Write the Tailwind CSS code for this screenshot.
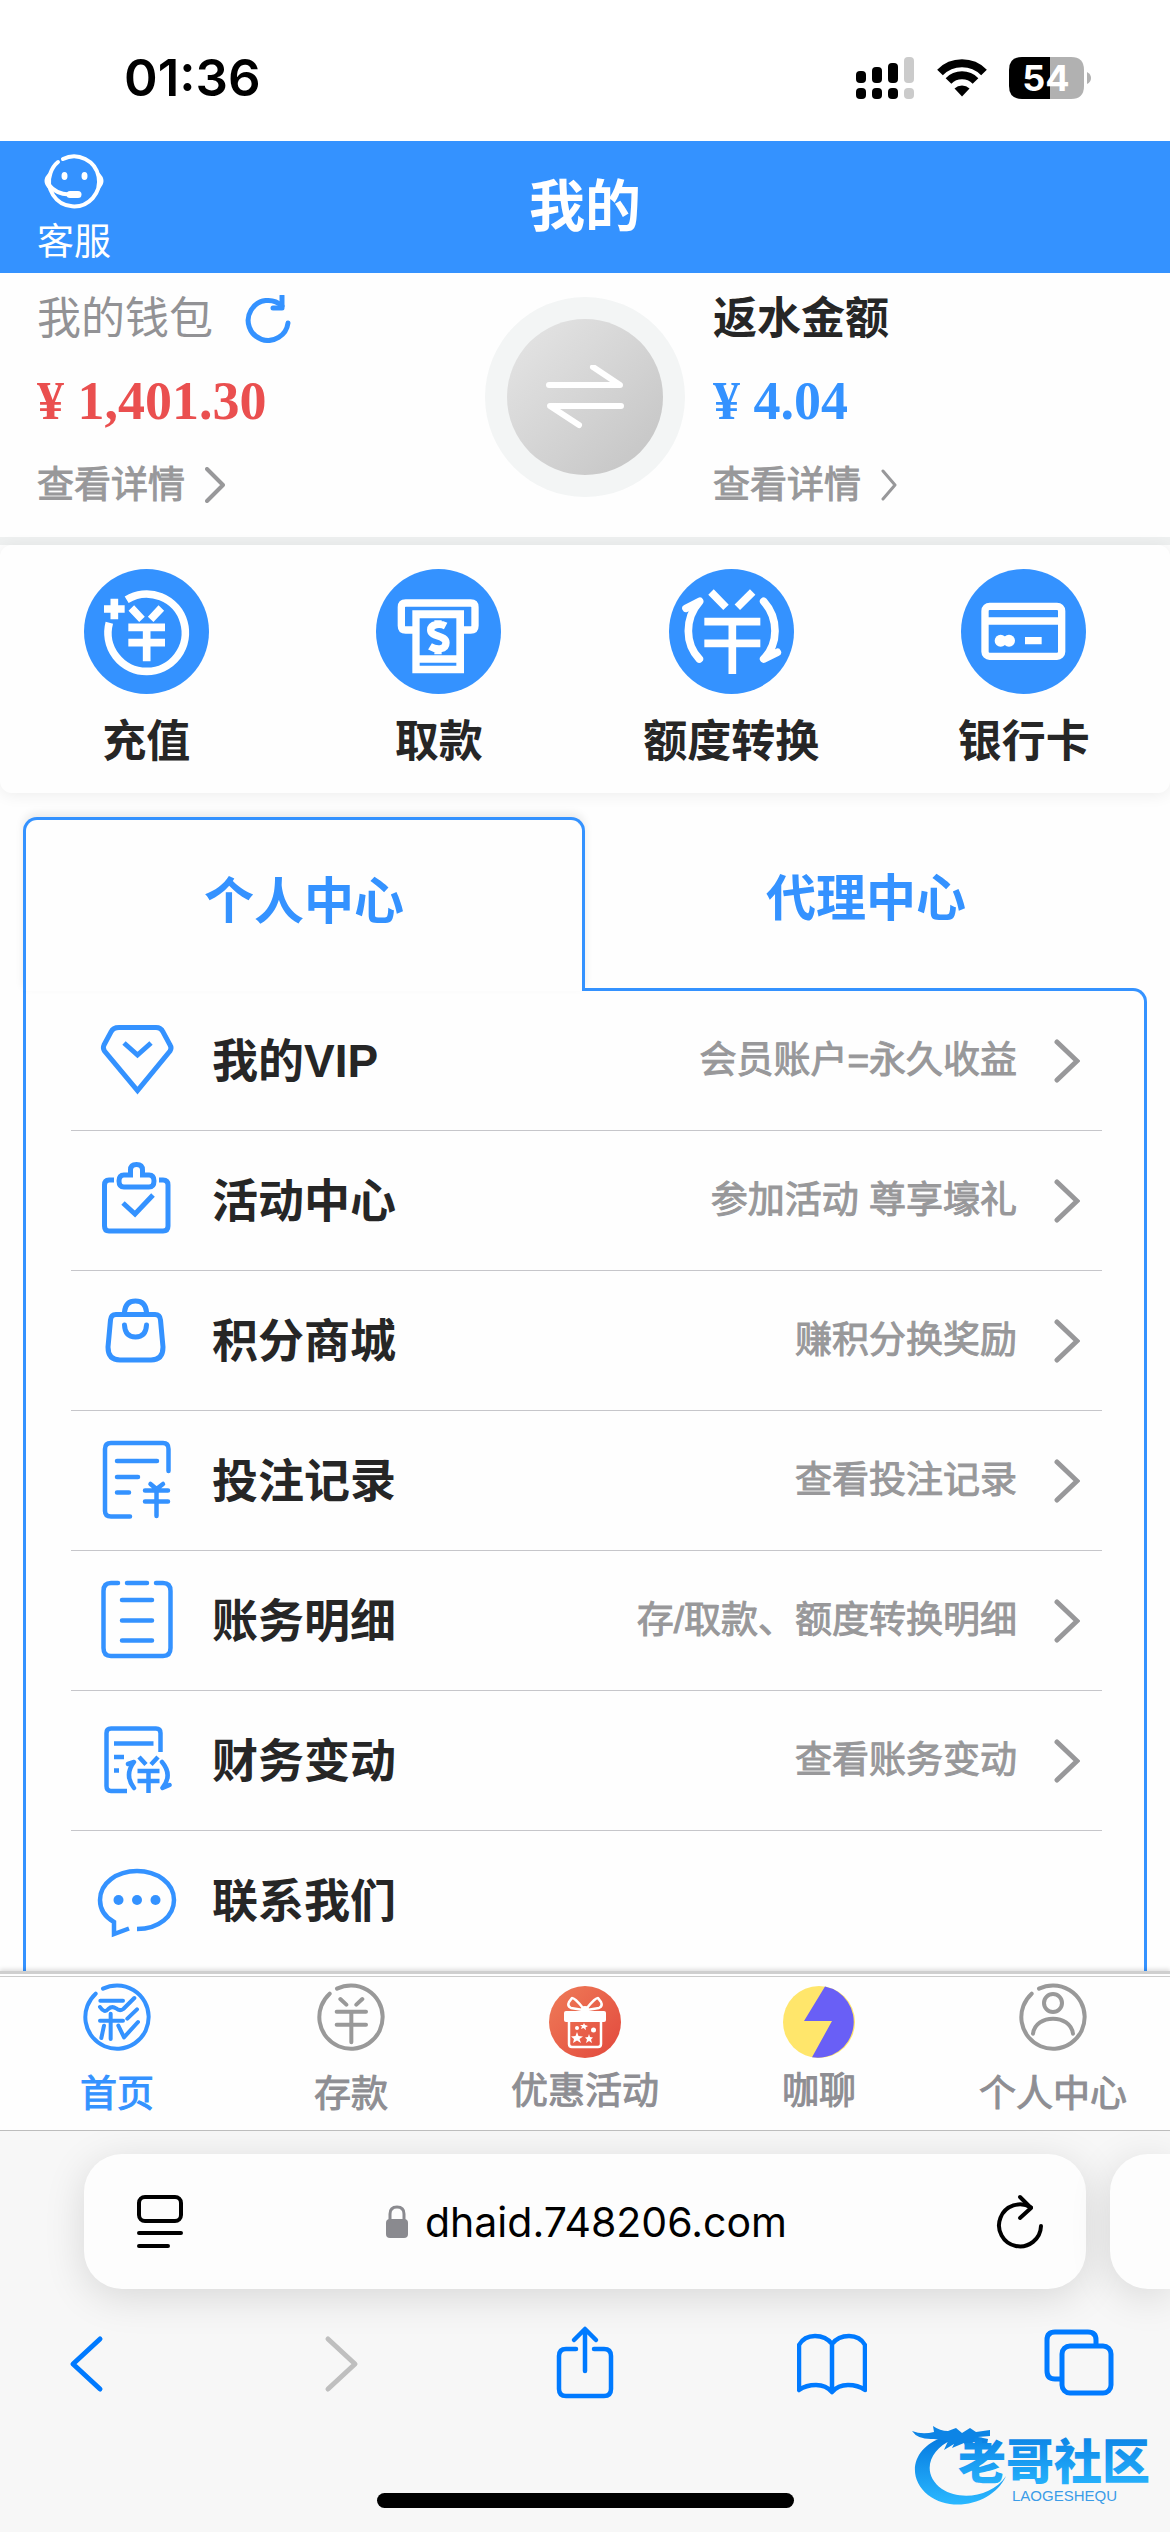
<!DOCTYPE html>
<html lang="zh-CN">
<head>
<meta charset="utf-8">
<meta name="viewport" content="width=device-width, initial-scale=1">
<title>我的</title>
<script src="https://cdn.jsdelivr.net/npm/@tailwindcss/browser@4"></script>
</head>
<body class="min-h-screen flex flex-col bg-[#fefefe] text-[#262626] font-['Liberation_Sans','Noto_Sans_CJK_SC',sans-serif]">

<!-- Status bar -->
<div class="h-[141px] pt-3.5 flex items-center justify-between pl-[124px] pr-[78px] bg-white text-black">
  <time class="font-['Inter',sans-serif] font-semibold text-[51px] leading-none">01:36</time>
  <svg class="w-[236px] h-[42px]" viewBox="0 0 236 42" role="img" aria-label="信号、无线网络、电量 54%">
    <g fill="#000">
      <rect x="0" y="14" width="10" height="12" rx="4"/><rect x="16" y="10" width="10" height="16" rx="4"/><rect x="32" y="6" width="10" height="20" rx="4"/>
      <rect x="0" y="31" width="10" height="11" rx="4"/><rect x="16" y="31" width="10" height="11" rx="4"/><rect x="32" y="31" width="10" height="11" rx="4"/>
    </g>
    <g fill="#cbcbcb"><rect x="48" y="0" width="10" height="26" rx="4"/><rect x="48" y="31" width="10" height="11" rx="4"/></g>
    <path d="M84 15.500A31 31 0 0 1 128 15.500" fill="none" stroke="#000" stroke-width="8"/>
    <path d="M92.500 24A19 19 0 0 1 119.500 24" fill="none" stroke="#000" stroke-width="8"/>
    <path d="M98.500 31.500A11 11 0 0 1 113.500 31.500L106 39.500Z" fill="#000"/>
    <path d="M166 0H194V42H166Q153 42 153 29V13Q153 0 166 0Z" fill="#000"/>
    <path d="M194 0H215Q228 0 228 13V29Q228 42 215 42H194Z" fill="#b1b1b1"/>
    <path d="M231 15Q235 17 235 21T231 27Z" fill="#b1b1b1"/>
    <text x="190" y="34" text-anchor="middle" font-family="Inter, sans-serif" font-weight="700" font-size="36" fill="#fff">54</text>
  </svg>
</div>

<!-- Page header -->
<header class="h-[132px] bg-[#3492ff] text-white grid grid-cols-[1fr_auto_1fr] items-center">
  <a href="#" class="justify-self-start ml-[37px] pt-1 flex flex-col items-center gap-2">
    <svg class="w-16 h-[60px]" viewBox="0 0 64 60" fill="none" stroke="#fff" stroke-width="4" stroke-linecap="round">
      <path d="M21 8A25 25 0 1 1 8.500 22Q11 15 16 11"/>
      <path d="M8 22Q-1 30 8 38M56 22Q65 30 56 38" fill="#fff" stroke-width="2"/>
      <path d="M7 34Q14 43 27 43.500"/><path d="M28 43.500H36" stroke-width="7"/>
      <ellipse cx="22.500" cy="25" rx="3" ry="4" fill="#fff" stroke="none"/><ellipse cx="42.500" cy="25" rx="3" ry="4" fill="#fff" stroke="none"/>
    </svg>
    <span class="text-[37px] leading-[48px]">客服</span>
  </a>
  <h1 class="text-[56px] leading-none font-bold">我的</h1>
</header>

<!-- Wallet summary -->
<section class="h-[264px] grid grid-cols-[1fr_200px_1fr] items-start pt-6">
  <div class="pl-[37px] flex flex-col">
    <div class="h-11 flex items-center gap-8 text-[#929295] text-[44px] leading-none">我的钱包
      <button type="button" aria-label="刷新"><svg class="w-12 h-12" viewBox="0 0 48 48" fill="none" stroke="#3492ff" stroke-width="5" stroke-linecap="round" stroke-linejoin="round"><path d="M37 11A20 20 0 1 0 43 28"/><path d="M37 1V13H28"/></svg></button>
    </div>
    <p class="mt-8 h-[56px] flex items-center text-[54px] leading-none font-bold text-[#ea4f4f] font-['Liberation_Serif',serif]">¥ 1,401.30</p>
    <a href="#" class="mt-8 h-12 flex items-center gap-5 text-[37px] leading-none text-[#98989a] [-webkit-text-stroke:1px]">查看详情
      <svg class="w-5 h-9" viewBox="0 0 20 36" fill="none" stroke="#98989a" stroke-width="4" stroke-linecap="round" stroke-linejoin="round"><path d="M2 2L18 18L2 34"/></svg></a>
  </div>
  <button type="button" aria-label="转换" class="w-[200px] h-[200px] rounded-full bg-[#f3f5f5] flex items-center justify-center">
    <span class="w-[156px] h-[156px] rounded-full bg-linear-to-br from-[#e6e6e6] to-[#c3c3c3] flex items-center justify-center">
      <svg class="w-20 h-16" viewBox="0 0 80 64" fill="none" stroke="#fff" stroke-width="6" stroke-linecap="round" stroke-linejoin="round"><path d="M4 20H75L48 2"/><path d="M76 41H5L34 60"/></svg>
    </span>
  </button>
  <div class="pl-7 flex flex-col">
    <h2 class="h-11 flex items-center text-[44px] leading-none font-bold">返水金额</h2>
    <p class="mt-8 h-[56px] flex items-center text-[54px] leading-none font-bold text-[#3492ff] font-['Liberation_Serif',serif]">¥ 4.04</p>
    <a href="#" class="mt-8 h-12 flex items-center gap-5 text-[37px] leading-none text-[#98989a] [-webkit-text-stroke:1px]">查看详情
      <svg class="w-4 h-8" viewBox="0 0 16 32" fill="none" stroke="#98989a" stroke-width="3" stroke-linecap="round" stroke-linejoin="round"><path d="M2 2L14 16L2 30"/></svg></a>
  </div>
</section>
<div class="h-2 bg-[#eef0f0]"></div>

<!-- Quick actions -->
<nav class="h-[248px] pt-6 rounded-xl shadow-[0_2px_16px_rgba(0,0,0,0.07)] grid grid-cols-4 text-[44px] leading-none font-bold">
  <a href="#" class="flex flex-col items-center gap-[26px]">
    <svg class="w-[125px] h-[125px]" viewBox="0 0 375 375" fill="none" stroke="#fff" stroke-width="23"><circle cx="187.500" cy="187.500" r="187.500" fill="#3492ff" stroke="none"/><path d="M128 92A116 116 0 1 1 76 161"/><path d="M60 120H122M91 89V151M142 117L174 151M232 117L200 151M133 175H243M133 221H243M188 175V277"/></svg>
    充值</a>
  <a href="#" class="flex flex-col items-center gap-[26px]">
    <svg class="w-[125px] h-[125px]" viewBox="0 0 375 375" fill="none" stroke="#fff" stroke-width="22"><circle cx="187.500" cy="187.500" r="187.500" fill="#3492ff" stroke="none"/><path d="M115 183H89Q76 183 76 170V115Q76 102 89 102H284Q297 102 297 115V170Q297 183 284 183H258"/><path d="M109 124H264V313H109Z" fill="#fff" stroke="none"/><path d="M131 148H241V259H131ZM131 281H241V290H131Z" fill="#3492ff" stroke="none"/><path d="M209 171C194 163 164 164 164 183C164 205 210 197 210 221C210 243 182 244 162 232M186 154V166M186 242V256"/></svg>
    取款</a>
  <a href="#" class="flex flex-col items-center gap-[26px]">
    <svg class="w-[125px] h-[125px]" viewBox="0 0 375 375" fill="none" stroke="#fff" stroke-width="23"><circle cx="187.500" cy="187.500" r="187.500" fill="#3492ff" stroke="none"/><path d="M126 69L171 115M251 69L205 115M106 158H274M106 223H274M190 158V315"/><path d="M51 118L92 97Q58 135 58 186Q58 235 91 270M284 97Q318 135 318 186Q318 235 284 270L325 250" stroke-linecap="round" stroke-linejoin="round"/></svg>
    额度转换</a>
  <a href="#" class="flex flex-col items-center gap-[26px]">
    <svg class="w-[125px] h-[125px]" viewBox="0 0 375 375" fill="none" stroke="#fff" stroke-width="22"><circle cx="187.500" cy="187.500" r="187.500" fill="#3492ff" stroke="none"/><rect x="72" y="112" width="230" height="150" rx="14"/><path d="M72 156H302M192 215H242"/><g fill="#fff" stroke="none"><circle cx="119" cy="215" r="18"/><circle cx="144" cy="215" r="18"/></g></svg>
    银行卡</a>
</nav>

<!-- Centre tabs and menu -->
<main class="mt-6 mx-[23px] flex-1 flex flex-col">
  <div role="tablist" class="grid grid-cols-2 text-[50px] leading-none font-bold text-[#3492ff]">
    <button type="button" role="tab" aria-selected="true" class="relative z-10 -mb-[3px] h-[174px] pb-2 border-3 border-b-0 border-[#3492ff] rounded-t-[14px] bg-[#fefefe] shadow-[0_-4px_8px_rgba(0,0,0,0.08)]">个人中心</button>
    <button type="button" role="tab" aria-selected="false" class="h-[171px] pb-2">代理中心</button>
  </div>
  <ul class="flex-1 border-3 border-b-0 border-[#3492ff] rounded-tr-[14px] pl-[45px] pr-[42px] text-[46px] leading-none">
    <li><a href="#" class="h-[140px] pl-[26px] pr-[22px] flex items-center border-b border-[#c6c6ca]">
      <svg class="w-20 h-20 mr-[35px] overflow-visible" viewBox="0 0 80 80" fill="none" stroke="#3492ff" stroke-width="5"><path d="M22 6.500H59Q64 6.500 66 11L73 24Q75 27 73 30L40.500 69.500L7.500 30Q5.500 27 7 24L14 11Q16 6.500 22 6.500Z"/><path d="M27 22L40.500 34L54 22"/></svg>
      <span class="flex-1 font-bold">我的VIP</span><span class="mr-[37px] text-[37px] text-[#98989a] [-webkit-text-stroke:1px]">会员账户=永久收益</span>
      <svg class="w-[26px] h-11" viewBox="0 0 26 44" fill="none" stroke="#98989a" stroke-width="5" stroke-linecap="round"><path d="M3 3L23 22L3 41"/></svg></a></li>
    <li><a href="#" class="h-[140px] pl-[26px] pr-[22px] flex items-center border-b border-[#c6c6ca]">
      <svg class="w-20 h-20 mr-[35px] overflow-visible" viewBox="0 0 80 80" fill="none" stroke="#3492ff" stroke-width="5"><path d="M17 19H12Q7.500 19 7.500 24V65Q7.500 70 12 70H66Q71 70 71 65V24Q71 19 66 19H62"/><path d="M33.500 14V9Q33.500 3.500 39.500 3.500T45.500 9V14H52Q57 14 57 20T52 26H27Q22 26 22 20T27 14Z"/><path d="M26 42L38 53L56 34"/></svg>
      <span class="flex-1 font-bold">活动中心</span><span class="mr-[37px] text-[37px] text-[#98989a] [-webkit-text-stroke:1px]">参加活动 尊享壕礼</span>
      <svg class="w-[26px] h-11" viewBox="0 0 26 44" fill="none" stroke="#98989a" stroke-width="5" stroke-linecap="round"><path d="M3 3L23 22L3 41"/></svg></a></li>
    <li><a href="#" class="h-[140px] pl-[26px] pr-[22px] flex items-center border-b border-[#c6c6ca]">
      <svg class="w-20 h-20 mr-[35px] overflow-visible" viewBox="0 0 80 80" fill="none" stroke="#3492ff" stroke-width="5" stroke-linecap="round"><path d="M27.500 13V11Q28.500 0 38.500 0T49.500 11V13M19 13.500H58Q63 13.500 63.500 19L66 46Q66 59 54 59H23Q11 59 11 46L13.500 19Q14 13.500 19 13.500Z"/><path d="M27.500 24Q28 36 38.500 36T49.500 24"/></svg>
      <span class="flex-1 font-bold">积分商城</span><span class="mr-[37px] text-[37px] text-[#98989a] [-webkit-text-stroke:1px]">赚积分换奖励</span>
      <svg class="w-[26px] h-11" viewBox="0 0 26 44" fill="none" stroke="#98989a" stroke-width="5" stroke-linecap="round"><path d="M3 3L23 22L3 41"/></svg></a></li>
    <li><a href="#" class="h-[140px] pl-[26px] pr-[22px] flex items-center border-b border-[#c6c6ca]">
      <svg class="w-20 h-20 mr-[35px] overflow-visible" viewBox="0 0 80 80" fill="none" stroke="#3492ff" stroke-width="4.500" stroke-linecap="round"><path d="M33 75.500H14Q8 75.500 8 70V8Q8 2 14 2H66Q71.500 2 71.500 8V30M20 20H60M20 36H41M20 51.500H32M48 49.500H71M48 60.500H71M59.500 49V75M53.500 43L59.500 48L66 43"/></svg>
      <span class="flex-1 font-bold">投注记录</span><span class="mr-[37px] text-[37px] text-[#98989a] [-webkit-text-stroke:1px]">查看投注记录</span>
      <svg class="w-[26px] h-11" viewBox="0 0 26 44" fill="none" stroke="#98989a" stroke-width="5" stroke-linecap="round"><path d="M3 3L23 22L3 41"/></svg></a></li>
    <li><a href="#" class="h-[140px] pl-[26px] pr-[22px] flex items-center border-b border-[#c6c6ca]">
      <svg class="w-20 h-20 mr-[35px] overflow-visible" viewBox="0 0 80 80" fill="none" stroke="#3492ff" stroke-width="4.500" stroke-linecap="round"><path d="M21 2H14Q6.500 2 6.500 10V67Q6.500 75 14 75H66Q73.500 75 73.500 67V10Q73.500 2 66 2H59M30 2H50M25 19H55M25 39.500H55M25 59.500H55"/></svg>
      <span class="flex-1 font-bold">账务明细</span><span class="mr-[37px] text-[37px] text-[#98989a] [-webkit-text-stroke:1px]">存/取款、额度转换明细</span>
      <svg class="w-[26px] h-11" viewBox="0 0 26 44" fill="none" stroke="#98989a" stroke-width="5" stroke-linecap="round"><path d="M3 3L23 22L3 41"/></svg></a></li>
    <li><a href="#" class="h-[140px] pl-[26px] pr-[22px] flex items-center border-b border-[#c6c6ca]">
      <svg class="w-20 h-20 mr-[35px] overflow-visible" viewBox="0 0 80 80" fill="none" stroke="#3492ff" stroke-width="4.500"><path d="M30 70H14Q9.500 70 9.500 65V12Q9.500 7.500 14 7.500H59Q63.500 7.500 63.500 12V31M17 22.500H56.500M17 36H27M17 49.500H22M42 36L49 43.500M61 36L54 43.500M40.500 50H62.500M40.500 60H62.500M51.500 50V72"/><path d="M31 43L37 41Q27 54 37 67M65 41Q76 54 65.500 67L72.500 64" stroke-linecap="round" stroke-linejoin="round"/></svg>
      <span class="flex-1 font-bold">财务变动</span><span class="mr-[37px] text-[37px] text-[#98989a] [-webkit-text-stroke:1px]">查看账务变动</span>
      <svg class="w-[26px] h-11" viewBox="0 0 26 44" fill="none" stroke="#98989a" stroke-width="5" stroke-linecap="round"><path d="M3 3L23 22L3 41"/></svg></a></li>
    <li><a href="#" class="h-[140px] pl-[26px] pr-[22px] flex items-center">
      <svg class="w-20 h-20 mr-[35px] overflow-visible" viewBox="0 0 80 80" fill="none" stroke="#3492ff" stroke-width="4.500"><path d="M40 68C62 68 77 55 77 39C77 22 60 10 40 10S3 22 3 39C3 48 8 56 17 61V73L32 67.500"/><g fill="#3492ff" stroke="none"><circle cx="21.500" cy="39" r="5"/><circle cx="40" cy="39" r="5"/><circle cx="58.500" cy="39" r="5"/></g></svg>
      <span class="flex-1 font-bold">联系我们</span></a></li>
  </ul>
</main>

<!-- Bottom tabs -->
<nav class="h-[160px] bg-[#fefefe] border-t-3 border-t-[#cfcfcf] shadow-[0_-2px_4px_rgba(0,0,0,0.12)] border-b border-b-[#bdbdbd] text-[37px] leading-[48px] text-[#8e8e93] [-webkit-text-stroke:1px]">
  <div class="mt-[2px] h-[154px] border-t border-[#cccccc] grid grid-cols-5">
    <a href="#" class="pt-[6px] flex flex-col items-center gap-5 text-[#3492ff]">
      <svg class="w-[68px] h-[68px]" viewBox="0 0 204 204" fill="none" stroke="#3492ff" stroke-width="12" stroke-linecap="round" stroke-linejoin="round"><path d="M60 17A95 95 0 1 1 38 32"/><path d="M52 53H120M51 72Q64 92 76 78Q87 68 99 76Q110 86 121 78L154 45M51 113H120M83 92V168M63 128L55 165M106 128L123 163L165 117M133 107L162 79"/></svg>
      首页</a>
    <a href="#" class="pt-[6px] flex flex-col items-center gap-5">
      <svg class="w-[68px] h-[68px]" viewBox="0 0 204 204" fill="none" stroke="#999" stroke-width="12" stroke-linecap="round"><path d="M60 17A95 95 0 1 1 38 32"/><path d="M70 48L88 65M136 48L118 65M59 86H147M59 125H147M103 86V178"/></svg>
      存款</a>
    <a href="#" class="pt-[9px] flex flex-col items-center gap-[10px]">
      <svg class="w-[72px] h-[72px]" viewBox="0 0 72 72"><defs><linearGradient id="gift" x1="0" y1="0" x2="1" y2="1"><stop offset="0" stop-color="#ef7c58"/><stop offset="1" stop-color="#e2483d"/></linearGradient></defs><circle cx="36" cy="36" r="36" fill="url(#gift)"/><g fill="none" stroke="#fff" stroke-width="2.500" stroke-linejoin="round"><path d="M34 24L22 22Q18 20 20 16L23 12Q26 12 34 22M38 24L50 22Q54 20 52 16L49 12Q46 12 38 22"/><path d="M20 34V58Q20 61 23 61H49Q52 61 52 58V34"/></g><circle cx="36" cy="24" r="4" fill="#fff"/><rect x="15" y="25" width="42" height="11" rx="2" fill="#fff"/><path d="M28 46L29.500 50L34 50.500L30.500 53L32 57L28 54.500L24 57L25 53L22 50.500L26.500 50ZM40 48L41 51L44 51.500L42 53.500L43 57L40 55L37 57L38 53.500L36 51.500L39 51ZM35 37L36 39L39 40L36.500 41.500L37 44L34.500 42L32 43L33 40.500L31 39L34 39Z" fill="#fff"/><circle cx="44.500" cy="44" r="2.500" fill="#fff"/><circle cx="28" cy="42" r="2" fill="#fff"/></svg>
      优惠活动</a>
    <a href="#" class="pt-[9px] flex flex-col items-center gap-[10px]">
      <svg class="w-[72px] h-[72px]" viewBox="0 0 72 72"><circle cx="36" cy="36" r="36" fill="#ffe66b"/><path d="M42 0.500A36 36 0 0 1 29 71.300L49 35H21Z" fill="#695ff6"/></svg>
      咖聊</a>
    <a href="#" class="pt-[6px] flex flex-col items-center gap-5">
      <svg class="w-[68px] h-[68px]" viewBox="0 0 204 204" fill="none" stroke="#999" stroke-width="12" stroke-linecap="round"><path d="M60 17A95 95 0 1 1 38 32"/><ellipse cx="102" cy="60" rx="27" ry="27"/><path d="M42 152C50 92 154 92 162 152"/></svg>
      个人中心</a>
  </div>
</nav>

<!-- Browser bar -->
<footer class="h-[401px] bg-[#f7f7f7] overflow-hidden flex flex-col">
  <div class="pt-[23px] flex pl-[84px] gap-6">
    <div class="flex-1 h-[135px] rounded-[38px] bg-[#fdfdfd] shadow-[0_8px_40px_rgba(0,0,0,0.13)] flex items-center justify-between pl-[52px] pr-[42px]">
      <button type="button" aria-label="页面菜单"><svg class="w-12 h-14" viewBox="0 0 48 56" fill="none" stroke="#000" stroke-width="4" stroke-linecap="round"><rect x="3" y="3" width="42" height="24" rx="6"/><path d="M3 39H45M3 52H32"/></svg></button>
      <label class="flex items-center gap-4">
        <svg class="w-6 h-9" viewBox="0 0 24 36" role="img" aria-label="安全连接"><path d="M5 18V10Q5 3 12 3T19 10V18" fill="none" stroke="#8a8a8f" stroke-width="3"/><rect x="1" y="15" width="22" height="19" rx="4" fill="#8a8a8f"/></svg>
        <input type="text" aria-label="地址" value="dhaid.748206.com" class="w-[370px] h-16 text-black font-['Inter',sans-serif] text-[41px]">
      </label>
      <button type="button" aria-label="重新加载"><svg class="w-12 h-14" viewBox="0 0 48 56" fill="none" stroke="#000" stroke-width="4" stroke-linecap="round" stroke-linejoin="round"><path d="M35 13.500A21 21 0 1 0 45 32"/><path d="M24 3L35 14L24 24"/></svg></button>
    </div>
    <div class="w-[60px] h-[135px] rounded-l-[38px] bg-[#fdfdfd] shadow-[0_8px_40px_rgba(0,0,0,0.13)]"></div>
  </div>
  <div class="mt-9 px-14 flex items-center justify-between">
    <button type="button" aria-label="后退"><svg class="w-[70px] h-[76px]" viewBox="0 0 70 76" fill="none" stroke="#007aff" stroke-width="5" stroke-linecap="round" stroke-linejoin="round"><path d="M44 14L17 39L44 64"/></svg></button>
    <button type="button" aria-label="前进" disabled><svg class="w-[70px] h-[76px]" viewBox="0 0 70 76" fill="none" stroke="#bfbfbf" stroke-width="5" stroke-linecap="round" stroke-linejoin="round"><path d="M25 14L52 39L25 64"/></svg></button>
    <button type="button" aria-label="分享"><svg class="w-[70px] h-[76px]" viewBox="0 0 70 76" fill="none" stroke="#007aff" stroke-width="4.500" stroke-linecap="round" stroke-linejoin="round"><path d="M26 24H16Q9 24 9 31V64Q9 71 16 71H54Q61 71 61 64V31Q61 24 54 24H44M35 46V5M24 15L35 4L46 15"/></svg></button>
    <button type="button" aria-label="书签"><svg class="w-[70px] h-[76px]" viewBox="1 0 70 76" fill="none" stroke="#007aff" stroke-width="4.500" stroke-linecap="round" stroke-linejoin="round"><path d="M36 67V19M36 67Q30 60 20 60T3 65V20Q8 11 19 11T36 19Q42 11 53 11T69 20V65Q62 60 52 60T36 67"/></svg></button>
    <button type="button" aria-label="标签页"><svg class="w-[70px] h-[76px]" viewBox="0 0 70 76" fill="none" stroke="#007aff" stroke-width="5" stroke-linecap="round"><rect x="18" y="21" width="49" height="47" rx="8"/><path d="M16 54H11Q3 54 3 46V15Q3 7 11 7H44Q52 7 52 15V19"/></svg></button>
  </div>
  <div class="mt-4 h-[100px] grid grid-cols-[1fr_417px_1fr]">
    <span></span>
    <span class="self-end mb-[9px] h-[15px] rounded-full bg-black"></span>
    <svg class="justify-self-end mr-4 w-[244px] h-[100px]" viewBox="0 0 244 100" role="img" aria-label="老哥社区">
      <defs><linearGradient id="brand" x1="0" y1="0" x2="0" y2="1"><stop offset="0" stop-color="#0579e0"/><stop offset="1" stop-color="#2ab8ff"/></linearGradient></defs>
      <path d="M34 20C2 30-4 60 18 78C43 97 84 86 96 59C82 80 50 84 32 72C10 56 20 32 42 23Z" fill="url(#brand)"/>
      <path d="M2 14Q12 18 24 15L23 9Q30 14 38 14L46 11L52 16L60 11L66 15L80 13L80 19L68 20L78 22L77 28L64 25L56 30L54 26L42 31L44 27L34 33L38 24L24 22Q8 23 2 14Z" fill="#0d84e5"/>
      <text x="48" y="62" font-family="'Noto Sans CJK SC', sans-serif" font-weight="900" font-size="48" fill="url(#brand)">老哥社区</text>
      <text x="102" y="84" font-family="'Liberation Sans', sans-serif" font-size="15" fill="#3a9ce8">LAOGESHEQU</text>
    </svg>
  </div>
</footer>
</body>
</html>
